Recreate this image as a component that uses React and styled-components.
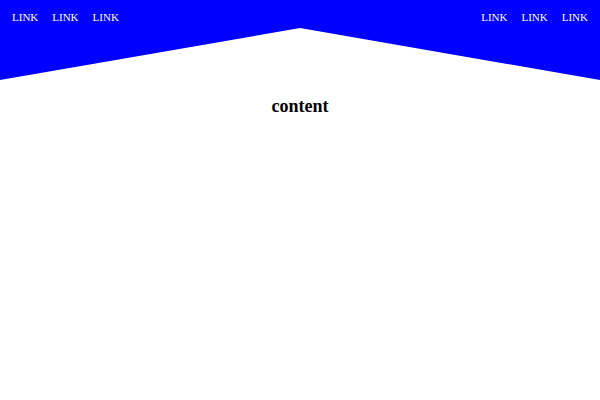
import React from "react";
import styled, { createGlobalStyle } from "styled-components";

const GlobalStyle = createGlobalStyle`
  html, body {
    margin: 0;
    padding: 0;
    background: #fff;
    font-family: "Liberation Serif", "Times New Roman", serif;
  }
`;

const links = ["LINK", "LINK", "LINK"];

// 헤더 (아래쪽이 가운데로 솟은 파란 배경)
const Header = styled.header`
  height: 80px;
  background: #0000ff;
  clip-path: polygon(0 0, 100% 0, 100% 100%, 50% 35%, 0 100%);
  display: flex;
  justify-content: space-between;
  align-items: flex-start;
  padding: 11px 12px 0;
  box-sizing: border-box;
`;

const Nav = styled.nav`
  display: flex;
  gap: 14px;
`;

const NavLink = styled.a`
  color: #fff;
  font-size: 11px;
  line-height: 13px;
  text-decoration: none;
  text-transform: uppercase;
`;

const Main = styled.main`
  padding-top: 16px;
  text-align: center;
`;

const Title = styled.h1`
  margin: 0;
  font-size: 18px;
  font-weight: bold;
  color: #000;
`;

const LinkGroup = ({ items }) => (
  <Nav>
    {items.map((label, idx) => (
      <NavLink key={idx} href="#">
        {label}
      </NavLink>
    ))}
  </Nav>
);

const App = () => {
  return (
    <>
      <GlobalStyle />
      <Header>
        <LinkGroup items={links} />
        <LinkGroup items={links} />
      </Header>
      <Main>
        <Title>content</Title>
      </Main>
    </>
  );
};

export default App;
